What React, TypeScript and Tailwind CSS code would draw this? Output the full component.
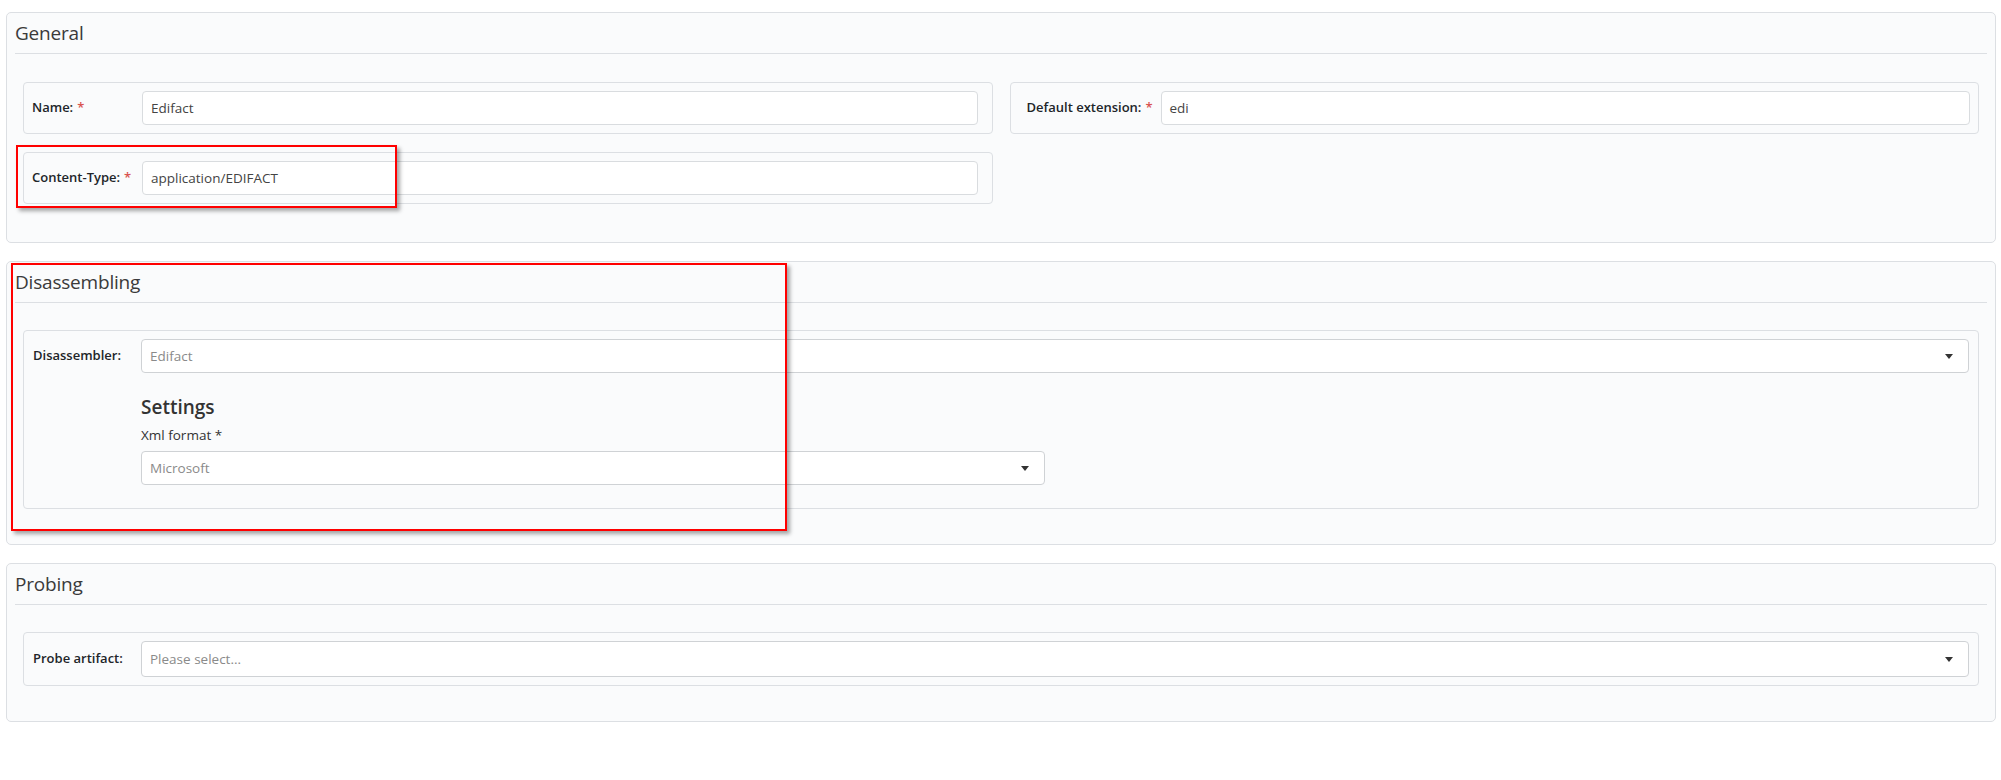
import React from "react";

function Caret() {
  return <span className="block h-0 w-0 border-x-[4px] border-t-[5px] border-x-transparent border-t-[#333]" />;
}

function Section({ title, children, bodyClass }: { title: string; children: React.ReactNode; bodyClass: string }) {
  return (
    <section className="rounded-[5px] border border-[#dcdfe3] bg-[#fafbfc]">
      <div className="mx-2 border-b border-[#dcdfe3] py-[7px]">
        <h2 className="text-[19px] font-normal leading-[26px] tracking-[-0.2px] text-[#3a3a3a]">{title}</h2>
      </div>
      <div className={bodyClass}>{children}</div>
    </section>
  );
}

function Req() {
  return <span className="ml-[4px] text-[#d9534f]">*</span>;
}

function TextInput({ value }: { value: string }) {
  return (
    <div className="flex h-[34px] min-w-0 flex-1 items-center rounded-[4px] border border-[#d9dcdf] bg-white px-[8px] text-[13.5px] text-[#444]">
      {value}
    </div>
  );
}

function Select({ value, className }: { value: string; className: string }) {
  return (
    <div
      className={
        "flex h-[34px] items-center justify-between rounded-[4px] border border-[#cfd2d5] bg-white pl-[8px] pr-[15px] text-[13.5px] text-[#8a8a8a] " +
        className
      }
    >
      <span>{value}</span>
      <Caret />
    </div>
  );
}

export default function App() {
  return (
    <div className="relative min-h-[780px] bg-white pl-[6px] pr-[5px] pt-[12px] font-['Open_Sans',sans-serif] text-[#212529]">
      <div className="flex flex-col gap-[18px]">
        <Section title="General" bodyClass="px-4 pt-[28px] pb-[38px]">
          <div className="grid grid-cols-2 gap-x-[17px] gap-y-[18px]">
            <div className="flex items-center rounded-[4px] border border-[#dcdfe3] bg-[#fafbfc] py-2 pr-[14px]">
              <div className="w-[118px] shrink-0 pl-[8px] text-[13px] font-semibold">
                Name:<Req />
              </div>
              <TextInput value="Edifact" />
            </div>
            <div className="flex items-center rounded-[4px] border border-[#dcdfe3] bg-[#fafbfc] py-2 pr-[8px]">
              <div className="w-[150px] shrink-0 pl-[16px] text-[13px] font-semibold">
                Default extension:<Req />
              </div>
              <TextInput value="edi" />
            </div>
            <div className="flex items-center rounded-[4px] border border-[#dcdfe3] bg-[#fafbfc] py-2 pr-[14px]">
              <div className="w-[118px] shrink-0 pl-[8px] text-[13px] font-semibold">
                Content-Type:<Req />
              </div>
              <TextInput value="application/EDIFACT" />
            </div>
          </div>
        </Section>

        <Section title="Disassembling" bodyClass="px-4 pt-[27px] pb-[35px]">
          <div className="flex rounded-[4px] border border-[#dcdfe3] bg-[#fafbfc] pt-2 pb-[23px] pr-[9px]">
            <div className="flex h-[34px] w-[117px] shrink-0 items-center pl-[9px] text-[13px] font-semibold">
              Disassembler:
            </div>
            <div className="flex min-w-0 flex-1 flex-col">
              <Select value="Edifact" className="w-full" />
              <h3 className="mt-[21px] text-[19px] font-semibold leading-[26px] text-[#333]">Settings</h3>
              <div className="mt-[5px] text-[13.5px] font-medium leading-[20px] text-[#333]">Xml format *</div>
              <Select value="Microsoft" className="mt-[6px] w-[904px]" />
            </div>
          </div>
        </Section>

        <Section title="Probing" bodyClass="px-4 pt-[27px] pb-[35px]">
          <div className="flex items-center rounded-[4px] border border-[#dcdfe3] bg-[#fafbfc] py-2 pr-[9px]">
            <div className="w-[117px] shrink-0 pl-[9px] text-[13px] font-semibold">Probe artifact:</div>
            <Select value="Please select..." className="h-[36px] min-w-0 flex-1" />
          </div>
        </Section>
      </div>

      <div className="pointer-events-none absolute left-[16px] top-[145px] h-[63px] w-[381px] border-2 border-[#ff0000] shadow-[3px_3px_4px_rgba(0,0,0,0.35)]" />
      <div className="pointer-events-none absolute left-[11px] top-[263px] h-[268px] w-[776px] border-2 border-[#ff0000] shadow-[3px_3px_4px_rgba(0,0,0,0.35)]" />
    </div>
  );
}
